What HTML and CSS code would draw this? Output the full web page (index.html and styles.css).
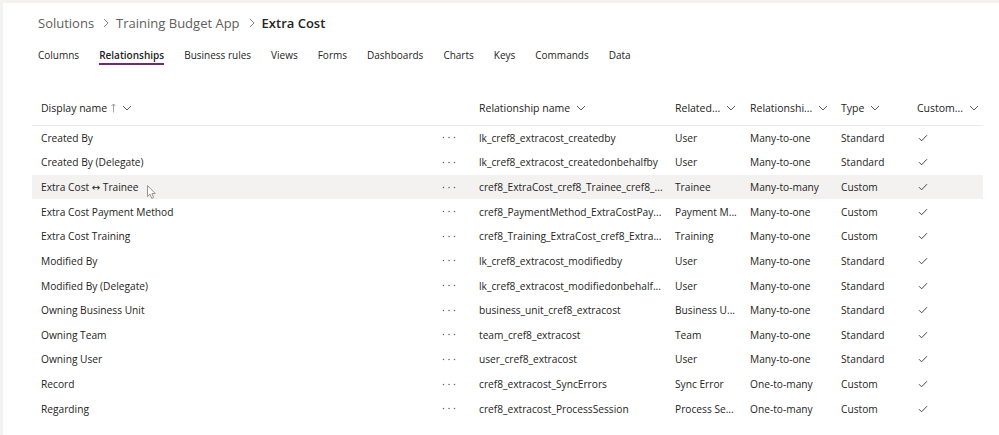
FILE: index.html
```html
<!DOCTYPE html>
<html lang="en">
<head>
<meta charset="utf-8">
<title>Extra Cost - Relationships</title>
<link rel="stylesheet" href="styles.css">
</head>
<body>
<div class="panel">
  <nav class="crumbs">
    <span class="crumb">Solutions</span>
    <span class="sep"><svg width="6" height="10" viewBox="0 0 6 10"><path d="M1 1 L5 5 L1 9" fill="none" stroke="#8a8886" stroke-width="1"/></svg></span>
    <span class="crumb">Training Budget App</span>
    <span class="sep"><svg width="6" height="10" viewBox="0 0 6 10"><path d="M1 1 L5 5 L1 9" fill="none" stroke="#8a8886" stroke-width="1"/></svg></span>
    <span class="crumb current">Extra Cost</span>
  </nav>
  <nav class="tabs">
    <span class="tab">Columns</span>
    <span class="tab active">Relationships</span>
    <span class="tab">Business rules</span>
    <span class="tab">Views</span>
    <span class="tab">Forms</span>
    <span class="tab">Dashboards</span>
    <span class="tab">Charts</span>
    <span class="tab">Keys</span>
    <span class="tab">Commands</span>
    <span class="tab">Data</span>
  </nav>

  <div class="grid">
    <div class="row head">
      <div class="cell c1"><span>Display name</span><svg class="up" width="5" height="10" viewBox="0 0 5 10"><path d="M2.5 9.5 V1 M0.5 3 L2.5 1 L4.5 3" fill="none" stroke="#8a8886" stroke-width="0.8"/></svg><svg class="chev" width="10" height="6" viewBox="0 0 10 6"><path d="M1 1 L5 5 L9 1" fill="none" stroke="#605e5c" stroke-width="1"/></svg></div>
      <div class="cell"><span>Relationship name</span><svg class="chev" width="10" height="6" viewBox="0 0 10 6"><path d="M1 1 L5 5 L9 1" fill="none" stroke="#605e5c" stroke-width="1"/></svg></div>
      <div class="cell"><span>Related...</span><svg class="chev" width="10" height="6" viewBox="0 0 10 6"><path d="M1 1 L5 5 L9 1" fill="none" stroke="#605e5c" stroke-width="1"/></svg></div>
      <div class="cell"><span>Relationshi...</span><svg class="chev" width="10" height="6" viewBox="0 0 10 6"><path d="M1 1 L5 5 L9 1" fill="none" stroke="#605e5c" stroke-width="1"/></svg></div>
      <div class="cell"><span>Type</span><svg class="chev" width="10" height="6" viewBox="0 0 10 6"><path d="M1 1 L5 5 L9 1" fill="none" stroke="#605e5c" stroke-width="1"/></svg></div>
      <div class="cell"><span>Custom...</span><svg class="chev" width="10" height="6" viewBox="0 0 10 6"><path d="M1 1 L5 5 L9 1" fill="none" stroke="#605e5c" stroke-width="1"/></svg></div>
    </div>

    <div class="row">
      <div class="cell c1"><span class="name">Created By</span><svg class="more" width="14" height="3" viewBox="0 0 14 3"><circle cx="1.5" cy="1.5" r="0.75" fill="#605e5c"/><circle cx="7" cy="1.5" r="0.75" fill="#605e5c"/><circle cx="12.5" cy="1.5" r="0.75" fill="#605e5c"/></svg></div>
      <div class="cell">lk_cref8_extracost_createdby</div>
      <div class="cell">User</div>
      <div class="cell">Many-to-one</div>
      <div class="cell">Standard</div>
      <div class="cell"><svg class="check" width="10" height="8" viewBox="0 0 10 8"><path d="M1 4.2 L3.6 6.8 L9 1.2" fill="none" stroke="#323130" stroke-width="0.9"/></svg></div>
    </div>
    <div class="row">
      <div class="cell c1"><span class="name">Created By (Delegate)</span><svg class="more" width="14" height="3" viewBox="0 0 14 3"><circle cx="1.5" cy="1.5" r="0.75" fill="#605e5c"/><circle cx="7" cy="1.5" r="0.75" fill="#605e5c"/><circle cx="12.5" cy="1.5" r="0.75" fill="#605e5c"/></svg></div>
      <div class="cell">lk_cref8_extracost_createdonbehalfby</div>
      <div class="cell">User</div>
      <div class="cell">Many-to-one</div>
      <div class="cell">Standard</div>
      <div class="cell"><svg class="check" width="10" height="8" viewBox="0 0 10 8"><path d="M1 4.2 L3.6 6.8 L9 1.2" fill="none" stroke="#323130" stroke-width="0.9"/></svg></div>
    </div>
    <div class="row hover">
      <div class="cell c1"><span class="name">Extra Cost <span class="arrow">↔</span> Trainee</span><svg class="more" width="14" height="3" viewBox="0 0 14 3"><circle cx="1.5" cy="1.5" r="0.75" fill="#605e5c"/><circle cx="7" cy="1.5" r="0.75" fill="#605e5c"/><circle cx="12.5" cy="1.5" r="0.75" fill="#605e5c"/></svg>
        <svg class="cursor" width="10" height="15" viewBox="0 0 10 15"><path d="M0.5 0.5 L0.5 11.5 L3 9.2 L4.8 13.4 L6.6 12.6 L4.9 8.6 L8.3 8.6 Z" fill="#ffffff" stroke="#8a8886" stroke-width="0.9" stroke-linejoin="round"/></svg>
      </div>
      <div class="cell">cref8_ExtraCost_cref8_Trainee_cref8_...</div>
      <div class="cell">Trainee</div>
      <div class="cell">Many-to-many</div>
      <div class="cell">Custom</div>
      <div class="cell"><svg class="check" width="10" height="8" viewBox="0 0 10 8"><path d="M1 4.2 L3.6 6.8 L9 1.2" fill="none" stroke="#323130" stroke-width="0.9"/></svg></div>
    </div>
    <div class="row">
      <div class="cell c1"><span class="name">Extra Cost Payment Method</span><svg class="more" width="14" height="3" viewBox="0 0 14 3"><circle cx="1.5" cy="1.5" r="0.75" fill="#605e5c"/><circle cx="7" cy="1.5" r="0.75" fill="#605e5c"/><circle cx="12.5" cy="1.5" r="0.75" fill="#605e5c"/></svg></div>
      <div class="cell">cref8_PaymentMethod_ExtraCostPay...</div>
      <div class="cell">Payment M...</div>
      <div class="cell">Many-to-one</div>
      <div class="cell">Custom</div>
      <div class="cell"><svg class="check" width="10" height="8" viewBox="0 0 10 8"><path d="M1 4.2 L3.6 6.8 L9 1.2" fill="none" stroke="#323130" stroke-width="0.9"/></svg></div>
    </div>
    <div class="row">
      <div class="cell c1"><span class="name">Extra Cost Training</span><svg class="more" width="14" height="3" viewBox="0 0 14 3"><circle cx="1.5" cy="1.5" r="0.75" fill="#605e5c"/><circle cx="7" cy="1.5" r="0.75" fill="#605e5c"/><circle cx="12.5" cy="1.5" r="0.75" fill="#605e5c"/></svg></div>
      <div class="cell">cref8_Training_ExtraCost_cref8_Extra...</div>
      <div class="cell">Training</div>
      <div class="cell">Many-to-one</div>
      <div class="cell">Custom</div>
      <div class="cell"><svg class="check" width="10" height="8" viewBox="0 0 10 8"><path d="M1 4.2 L3.6 6.8 L9 1.2" fill="none" stroke="#323130" stroke-width="0.9"/></svg></div>
    </div>
    <div class="row">
      <div class="cell c1"><span class="name">Modified By</span><svg class="more" width="14" height="3" viewBox="0 0 14 3"><circle cx="1.5" cy="1.5" r="0.75" fill="#605e5c"/><circle cx="7" cy="1.5" r="0.75" fill="#605e5c"/><circle cx="12.5" cy="1.5" r="0.75" fill="#605e5c"/></svg></div>
      <div class="cell">lk_cref8_extracost_modifiedby</div>
      <div class="cell">User</div>
      <div class="cell">Many-to-one</div>
      <div class="cell">Standard</div>
      <div class="cell"><svg class="check" width="10" height="8" viewBox="0 0 10 8"><path d="M1 4.2 L3.6 6.8 L9 1.2" fill="none" stroke="#323130" stroke-width="0.9"/></svg></div>
    </div>
    <div class="row">
      <div class="cell c1"><span class="name">Modified By (Delegate)</span><svg class="more" width="14" height="3" viewBox="0 0 14 3"><circle cx="1.5" cy="1.5" r="0.75" fill="#605e5c"/><circle cx="7" cy="1.5" r="0.75" fill="#605e5c"/><circle cx="12.5" cy="1.5" r="0.75" fill="#605e5c"/></svg></div>
      <div class="cell">lk_cref8_extracost_modifiedonbehalf...</div>
      <div class="cell">User</div>
      <div class="cell">Many-to-one</div>
      <div class="cell">Standard</div>
      <div class="cell"><svg class="check" width="10" height="8" viewBox="0 0 10 8"><path d="M1 4.2 L3.6 6.8 L9 1.2" fill="none" stroke="#323130" stroke-width="0.9"/></svg></div>
    </div>
    <div class="row">
      <div class="cell c1"><span class="name">Owning Business Unit</span><svg class="more" width="14" height="3" viewBox="0 0 14 3"><circle cx="1.5" cy="1.5" r="0.75" fill="#605e5c"/><circle cx="7" cy="1.5" r="0.75" fill="#605e5c"/><circle cx="12.5" cy="1.5" r="0.75" fill="#605e5c"/></svg></div>
      <div class="cell">business_unit_cref8_extracost</div>
      <div class="cell">Business U...</div>
      <div class="cell">Many-to-one</div>
      <div class="cell">Standard</div>
      <div class="cell"><svg class="check" width="10" height="8" viewBox="0 0 10 8"><path d="M1 4.2 L3.6 6.8 L9 1.2" fill="none" stroke="#323130" stroke-width="0.9"/></svg></div>
    </div>
    <div class="row">
      <div class="cell c1"><span class="name">Owning Team</span><svg class="more" width="14" height="3" viewBox="0 0 14 3"><circle cx="1.5" cy="1.5" r="0.75" fill="#605e5c"/><circle cx="7" cy="1.5" r="0.75" fill="#605e5c"/><circle cx="12.5" cy="1.5" r="0.75" fill="#605e5c"/></svg></div>
      <div class="cell">team_cref8_extracost</div>
      <div class="cell">Team</div>
      <div class="cell">Many-to-one</div>
      <div class="cell">Standard</div>
      <div class="cell"><svg class="check" width="10" height="8" viewBox="0 0 10 8"><path d="M1 4.2 L3.6 6.8 L9 1.2" fill="none" stroke="#323130" stroke-width="0.9"/></svg></div>
    </div>
    <div class="row">
      <div class="cell c1"><span class="name">Owning User</span><svg class="more" width="14" height="3" viewBox="0 0 14 3"><circle cx="1.5" cy="1.5" r="0.75" fill="#605e5c"/><circle cx="7" cy="1.5" r="0.75" fill="#605e5c"/><circle cx="12.5" cy="1.5" r="0.75" fill="#605e5c"/></svg></div>
      <div class="cell">user_cref8_extracost</div>
      <div class="cell">User</div>
      <div class="cell">Many-to-one</div>
      <div class="cell">Standard</div>
      <div class="cell"><svg class="check" width="10" height="8" viewBox="0 0 10 8"><path d="M1 4.2 L3.6 6.8 L9 1.2" fill="none" stroke="#323130" stroke-width="0.9"/></svg></div>
    </div>
    <div class="row">
      <div class="cell c1"><span class="name">Record</span><svg class="more" width="14" height="3" viewBox="0 0 14 3"><circle cx="1.5" cy="1.5" r="0.75" fill="#605e5c"/><circle cx="7" cy="1.5" r="0.75" fill="#605e5c"/><circle cx="12.5" cy="1.5" r="0.75" fill="#605e5c"/></svg></div>
      <div class="cell">cref8_extracost_SyncErrors</div>
      <div class="cell">Sync Error</div>
      <div class="cell">One-to-many</div>
      <div class="cell">Custom</div>
      <div class="cell"><svg class="check" width="10" height="8" viewBox="0 0 10 8"><path d="M1 4.2 L3.6 6.8 L9 1.2" fill="none" stroke="#323130" stroke-width="0.9"/></svg></div>
    </div>
    <div class="row">
      <div class="cell c1"><span class="name">Regarding</span><svg class="more" width="14" height="3" viewBox="0 0 14 3"><circle cx="1.5" cy="1.5" r="0.75" fill="#605e5c"/><circle cx="7" cy="1.5" r="0.75" fill="#605e5c"/><circle cx="12.5" cy="1.5" r="0.75" fill="#605e5c"/></svg></div>
      <div class="cell">cref8_extracost_ProcessSession</div>
      <div class="cell">Process Se...</div>
      <div class="cell">One-to-many</div>
      <div class="cell">Custom</div>
      <div class="cell"><svg class="check" width="10" height="8" viewBox="0 0 10 8"><path d="M1 4.2 L3.6 6.8 L9 1.2" fill="none" stroke="#323130" stroke-width="0.9"/></svg></div>
    </div>
  </div>
</div>
</body>
</html>
```

FILE: styles.css
```css
html, body {
  margin: 0;
  padding: 0;
}
body {
  background: #f3f2f1;
  font-family: "Open Sans", "Noto Sans", sans-serif;
  color: #252423;
  width: 999px;
  height: 435px;
  overflow: hidden;
}
.panel {
  background: #ffffff;
  margin: 3px 0 0 3px;
  height: 432px;
  padding: 8px 0 0 0;
  box-sizing: border-box;
}
.crumbs {
  display: flex;
  align-items: center;
  height: 24px;
  padding-left: 35px;
  font-size: 13px;
  color: #605e5c;
}
.crumb.current {
  color: #252423;
  font-weight: 600;
}
.sep {
  display: flex;
  align-items: center;
  margin: 0 7px 0 9px;
}
.tabs {
  display: flex;
  gap: 20px;
  padding-left: 35px;
  margin-top: 12.5px;
  font-size: 10px;
}
.tab {
  line-height: 15px;
  border-bottom: 2px solid transparent;
  color: #252423;
}
.tab.active {
  font-weight: 600;
  border-bottom-color: #742774;
}
.grid {
  margin: 27px 0 0 29px;
  width: 951px;
  font-size: 10.2px;
}
.row {
  display: grid;
  grid-template-columns: 438px 196px 75px 91px 76px 75px;
  height: 24.64px;
  align-items: center;
}
.row.head {
  height: 33px;
  border-bottom: 1px solid #edebe9;
  font-size: 10.5px;
}
.row.hover {
  background: #f3f2f1;
}
.cell {
  padding-left: 9px;
  display: flex;
  align-items: center;
  white-space: nowrap;
  overflow: hidden;
}
.c1 {
  position: relative;
  overflow: visible;
}
.name {
  flex: 1;
}
.arrow {
  font-family: "DejaVu Sans", sans-serif;
  font-size: 10px;
}
.more {
  margin-right: 14px;
}
.up {
  margin-left: 4px;
}
.chev {
  margin-left: 6px;
}
.check {
  margin-left: 1px;
}
.cursor {
  position: absolute;
  left: 115px;
  top: 5px;
}
```
